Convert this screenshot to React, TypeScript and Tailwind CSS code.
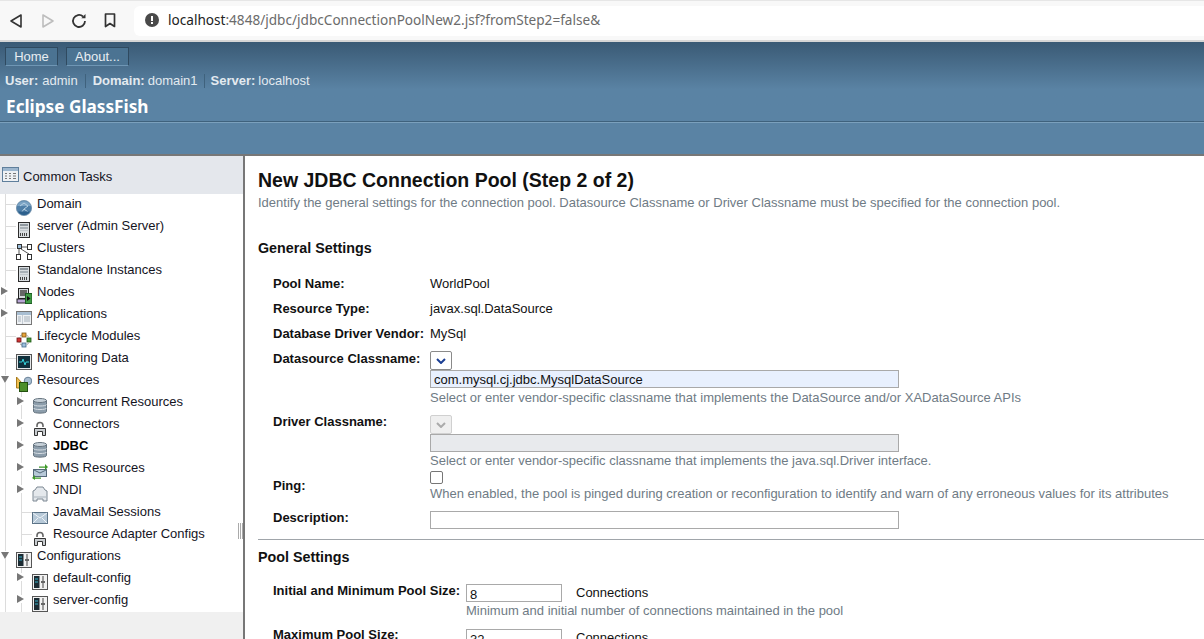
import type { ReactNode } from 'react';

const arial = 'font-["Liberation_Sans",Arial,sans-serif]';

function Glyph({ kind }: { kind: string }) {
  switch (kind) {
    case 'globe':
      return (
        <svg width="16" height="16" viewBox="0 0 16 16">
          <circle cx="8" cy="8" r="7.6" fill="#4f7fa8" stroke="#6f8ea8" strokeWidth="0.8" />
          <path d="M1 6a7.5 7.5 0 0 1 14 0z" fill="#7ba3c4" />
          <path d="M4 6l4-3 4 3-4 3-3 4M8 9l4 3" fill="none" stroke="#b6d0e3" />
          <path d="M2 11.5a7 7 0 0 0 12 0z" fill="#2c5f8c" />
        </svg>
      );
    case 'server':
      return (
        <svg width="16" height="16" viewBox="0 0 16 16">
          <rect x="2.5" y="0.5" width="11" height="15" fill="#d9dde0" stroke="#2b2b2b" />
          <rect x="4" y="2" width="8" height="2" fill="#8f989f" />
          <rect x="4" y="5" width="8" height="2" fill="#a8b0b6" />
          <rect x="4" y="8" width="8" height="1" fill="#c2c8cc" />
          <path d="M4.5 11v3M6.5 11v3M8.5 11v3M10.5 11v3" stroke="#444" />
        </svg>
      );
    case 'clusters':
      return (
        <svg width="16" height="16" viewBox="0 0 16 16" fill="#fff" stroke="#333">
          <path d="M5 3h6M3 5v6M5 5l8 5" fill="none" stroke="#555" />
          <rect x="1.5" y="0.5" width="4" height="4" fill="#9fc0dc" />
          <rect x="11.5" y="0.5" width="4" height="5" />
          <rect x="0.5" y="10.5" width="4" height="5" />
          <rect x="11.5" y="10.5" width="4" height="5" />
        </svg>
      );
    case 'nodes':
      return (
        <svg width="16" height="16" viewBox="0 0 16 16">
          <rect x="2.5" y="0.5" width="10" height="10" fill="#d5d9dc" stroke="#222" />
          <rect x="4" y="2" width="7" height="6" fill="#666" />
          <rect x="1" y="11" width="9" height="4" fill="#b9a6d6" stroke="#222" />
          <rect x="9.5" y="5.5" width="6.5" height="10" fill="#3f9a45" stroke="#1c5c22" />
          <path d="M11 8l3.5 2.5L11 13z" fill="#111" />
        </svg>
      );
    case 'apps':
      return (
        <svg width="16" height="16" viewBox="0 0 16 16">
          <rect x="0.5" y="1.5" width="15" height="13" fill="#eef1f4" stroke="#777" />
          <rect x="1" y="2" width="14" height="3" fill="#a8bed2" />
          <path d="M6.5 5v9" stroke="#c4ccd4" />
          <path d="M2 7h3M2 9h3M2 11h3M8 7h6M8 9h6M8 11h6" stroke="#a5b0ba" />
        </svg>
      );
    case 'lifecycle':
      return (
        <svg width="16" height="16" viewBox="0 0 16 16">
          <circle cx="8" cy="8" r="5.5" fill="none" stroke="#8a8a8a" strokeDasharray="2 1.5" />
          <rect x="6" y="1" width="4" height="4" fill="#e8a33a" stroke="#7a5412" strokeWidth="0.8" />
          <rect x="1" y="6" width="4" height="4" fill="#d13434" stroke="#6e1414" strokeWidth="0.8" />
          <rect x="11" y="6" width="4" height="4" fill="#4c9a3f" stroke="#1f5a16" strokeWidth="0.8" />
          <rect x="6" y="11" width="4" height="4" fill="#9fc0dc" stroke="#446b8c" strokeWidth="0.8" />
        </svg>
      );
    case 'monitor':
      return (
        <svg width="16" height="16" viewBox="0 0 16 16">
          <rect x="0.5" y="0.5" width="15" height="15" fill="#e6e8ea" stroke="#555" />
          <rect x="2" y="2" width="12" height="12" fill="#10303c" />
          <path d="M3 8h3l1-3 2 6 1-3h3" fill="none" stroke="#35d0d8" />
        </svg>
      );
    case 'resources':
      return (
        <svg width="16" height="16" viewBox="0 0 16 16">
          <path d="M0.5 1L6 7v5H0.5z" fill="#f0c050" stroke="#a87a1c" />
          <circle cx="12" cy="5" r="3.8" fill="#a8bdd0" stroke="#6a8299" />
          <rect x="3.5" y="6.5" width="8" height="9" fill="#4d8f2a" stroke="#23500f" />
        </svg>
      );
    case 'db':
      return (
        <svg width="16" height="16" viewBox="0 0 16 16">
          <path d="M1.5 2.5v11c0 2.2 13 2.2 13 0v-11z" fill="#8c9dab" stroke="#66747f" />
          <ellipse cx="8" cy="2.5" rx="6.5" ry="2" fill="#c7d1d9" stroke="#66747f" />
          <path d="M1.5 6.5c0 2 13 2 13 0M1.5 10c0 2 13 2 13 0" fill="none" stroke="#d6dde3" />
        </svg>
      );
    case 'connector':
      return (
        <svg width="16" height="16" viewBox="0 0 16 16">
          <path d="M5 7V5.5a3 3 0 0 1 6 0V7" fill="none" stroke="#666" strokeWidth="1.6" />
          <path d="M2.5 15.5V8.5h11v7h-3v-4h-5v4z" fill="#c8ccd0" stroke="#333" />
        </svg>
      );
    case 'jms':
      return (
        <svg width="16" height="16" viewBox="0 0 16 16">
          <rect x="1.5" y="5.5" width="13" height="7" fill="#b7c9d8" stroke="#55697a" />
          <path d="M2 6l6 3 6-3" fill="none" stroke="#55697a" />
          <path d="M7 2.5h6V0l3 3-3 3V3.8H7z" fill="#3f9a2a" />
          <path d="M9 13.5H3V11l-3 3 3 2v-1.2h6z" fill="#3f9a2a" />
        </svg>
      );
    case 'jndi':
      return (
        <svg width="16" height="16" viewBox="0 0 16 16">
          <path d="M3 4l2-3h6l2 3 2 1v10h-4v-2H5v2H1V5z" fill="#e4e8ec" stroke="#7c8893" />
          <path d="M2 11h12" stroke="#aab4bd" />
        </svg>
      );
    case 'mail':
      return (
        <svg width="16" height="12" viewBox="0 0 16 12">
          <rect x="0.5" y="0.5" width="15" height="11" fill="#b7c9d8" stroke="#5c7488" />
          <path d="M1 1l7 5 7-5M1 11l5-5M15 11l-5-5" fill="none" stroke="#eef3f7" />
        </svg>
      );
    default:
      return (
        <svg width="16" height="16" viewBox="0 0 16 16">
          <rect x="0.5" y="0.5" width="15" height="15" fill="#f2f2f2" stroke="#555" />
          <rect x="2" y="2" width="5.5" height="12" fill="#1c2b33" />
          <path d="M3 5h3M3 8h3" stroke="#35b0c8" />
          <path d="M11 2v12" stroke="#444" />
          <rect x="9" y="7" width="4" height="2" fill="#666" />
        </svg>
      );
  }
}

type TreeItem = {
  label: string;
  icon: string;
  level: 1 | 2;
  arrow?: 'right' | 'down';
  bold?: boolean;
};

const treeItems: TreeItem[] = [
  { label: 'Domain', icon: 'globe', level: 1 },
  { label: 'server (Admin Server)', icon: 'server', level: 1 },
  { label: 'Clusters', icon: 'clusters', level: 1 },
  { label: 'Standalone Instances', icon: 'server', level: 1 },
  { label: 'Nodes', icon: 'nodes', level: 1, arrow: 'right' },
  { label: 'Applications', icon: 'apps', level: 1, arrow: 'right' },
  { label: 'Lifecycle Modules', icon: 'lifecycle', level: 1 },
  { label: 'Monitoring Data', icon: 'monitor', level: 1 },
  { label: 'Resources', icon: 'resources', level: 1, arrow: 'down' },
  { label: 'Concurrent Resources', icon: 'db', level: 2, arrow: 'right' },
  { label: 'Connectors', icon: 'connector', level: 2, arrow: 'right' },
  { label: 'JDBC', icon: 'db', level: 2, arrow: 'right', bold: true },
  { label: 'JMS Resources', icon: 'jms', level: 2, arrow: 'right' },
  { label: 'JNDI', icon: 'jndi', level: 2, arrow: 'right' },
  { label: 'JavaMail Sessions', icon: 'mail', level: 2 },
  { label: 'Resource Adapter Configs', icon: 'connector', level: 2 },
  { label: 'Configurations', icon: 'config', level: 1, arrow: 'down' },
  { label: 'default-config', icon: 'config', level: 2, arrow: 'right' },
  { label: 'server-config', icon: 'config', level: 2, arrow: 'right' },
];

function Arrow({ dir }: { dir: 'right' | 'down' }) {
  return (
    <svg width="8" height="8" viewBox="0 0 8 8" className="shrink-0">
      {dir === 'right' ? <path d="M0 0l7 4-7 4z" fill="#777" /> : <path d="M0 1h8L4 8z" fill="#777" />}
    </svg>
  );
}

function TreeRow({ item }: { item: TreeItem }) {
  return (
    <div className="flex h-[22px] text-[13px] leading-[20px] text-[#14141e]">
      {/* guide column for the top level */}
      <div className="flex w-[16px] shrink-0">
        <div className="relative ml-[5px] h-full w-[11px] border-l border-[#dcdcdc]">
          {item.level === 1 && !item.arrow && <div className="mt-[10px] h-px w-[10px] bg-[#dcdcdc]" />}
          {item.level === 1 && item.arrow && (
            <div className="absolute left-[-5px] top-[5px] bg-white">
              <Arrow dir={item.arrow} />
            </div>
          )}
        </div>
      </div>
      {item.level === 2 && (
        <div className="flex w-[16px] shrink-0">
          <div className="relative ml-[5px] h-full w-[11px] border-l border-[#dcdcdc]">
            {!item.arrow && <div className="mt-[10px] h-px w-[10px] bg-[#dcdcdc]" />}
            {item.arrow && (
              <div className="absolute left-[-5px] top-[5px] bg-white">
                <Arrow dir={item.arrow} />
              </div>
            )}
          </div>
        </div>
      )}
      <div className="flex h-full w-[21px] shrink-0 items-end">
        <Glyph kind={item.icon} />
      </div>
      <span className={item.bold ? 'font-bold text-black' : ''}>{item.label}</span>
    </div>
  );
}

function BrowserBar() {
  return (
    <div className="flex h-[42px] items-center border-b-2 border-t border-b-[#d6d6d6] border-t-[#e6e6e6] bg-[#f8f8f8]">
      <div className="flex w-[134px] shrink-0 items-center pl-[9px]">
        <svg width="14" height="16" viewBox="0 0 14 16" fill="none" stroke="#333" strokeWidth="1.6" className="mr-[18px]">
          <path d="M12 2v12L2 8z" strokeLinejoin="round" />
        </svg>
        <svg width="14" height="16" viewBox="0 0 14 16" fill="none" stroke="#bdbdbd" strokeWidth="1.6" className="mr-[16px]">
          <path d="M2 2v12l10-6z" strokeLinejoin="round" />
        </svg>
        <svg width="16" height="16" viewBox="0 0 16 16" fill="none" stroke="#333" strokeWidth="1.8" className="mr-[17px]">
          <path d="M14 8a6 6 0 1 1-2-4.5" />
          <path d="M14.5 1v4.2h-4.2z" fill="#333" stroke="none" />
        </svg>
        <svg width="12" height="15" viewBox="0 0 12 15" fill="none" stroke="#333" strokeWidth="1.7">
          <path d="M1.5 1h9v12.5L6 10.5l-4.5 3z" strokeLinejoin="round" />
        </svg>
      </div>
      <div className="flex h-[30px] flex-1 items-center rounded-l-[6px] bg-white pb-[1px] pl-[11px] font-['Noto_Sans',sans-serif] text-[13.6px] text-[#6b6b6b]">
        <svg width="14" height="14" viewBox="0 0 14 14" className="mr-[9px] shrink-0">
          <circle cx="7" cy="7" r="7" fill="#4a4a4a" />
          <rect x="6" y="3" width="2" height="5" fill="#fff" />
          <rect x="6" y="9" width="2" height="2" fill="#fff" />
        </svg>
        <span className="text-[#222]">localhost</span>
        <span>:4848/jdbc/jdbcConnectionPoolNew2.jsf?fromStep2=false&amp;</span>
      </div>
    </div>
  );
}

function MastButton({ children, className }: { children: ReactNode; className: string }) {
  return (
    <div
      className={`flex h-[19px] items-center justify-center border border-t-[#2f4a60] border-l-[#2f4a60] border-r-[#2f4a60] border-b-[#6f96b4] bg-[#4b7392] text-[13px] text-[#e8eef3] ${className}`}
    >
      {children}
    </div>
  );
}

function Masthead() {
  return (
    <div className={`${arial} h-[114px] border-b-2 border-[#777] bg-[#5a83a4]`}>
      <div className="h-[80px] border-b border-[#3f627d] bg-gradient-to-b from-[#3a5a75] to-[#5a83a4] to-[60%] pl-[5px] pt-[5px]">
        <div className="flex gap-[8px]">
          <MastButton className="w-[53px]">Home</MastButton>
          <MastButton className="w-[63px]">About...</MastButton>
        </div>
        <div className="mt-[6px] flex h-[18px] items-center text-[13px] text-[#e3eaf0]">
          <b>User:</b>
          <span className="ml-[4px]">admin</span>
          <div className="mx-[7px] h-[14px] w-px bg-[#3f627d]" />
          <b>Domain:</b>
          <span className="ml-[3px]">domain1</span>
          <div className="mx-[6px] h-[14px] w-px bg-[#3f627d]" />
          <b>Server:</b>
          <span className="ml-[3px]">localhost</span>
        </div>
        <div className="ml-px mt-[4px] font-['Noto_Sans',sans-serif] text-[17.2px] font-bold leading-[26px] text-white">
          Eclipse GlassFish
        </div>
      </div>
      <div className="h-px bg-[#7ba0bc]" />
    </div>
  );
}

function Sidebar() {
  return (
    <div className="flex w-[245px] shrink-0 flex-col border-r-2 border-[#777] bg-[#f0f0f0]">
      <div className="flex h-[38px] shrink-0 items-center bg-[#e4e7ec] pl-[2px] pt-[3px] text-[13px] text-[#14141e]">
        <svg width="17" height="15" viewBox="0 0 17 15" className="mb-[4px] mr-[4px]">
          <rect x="0.5" y="0.5" width="16" height="14" fill="#eef1f4" stroke="#5f7f9c" />
          <rect x="1" y="1" width="15" height="3" fill="#9db7cf" />
          <path d="M3 6.5h2M7 6.5h2M11 6.5h3M3 9h2M7 9h2M11 9h3M3 11.5h2M7 11.5h2M11 11.5h3" stroke="#777" />
        </svg>
        Common Tasks
      </div>
      <div className="relative bg-white">
        {treeItems.map((item) => (
          <TreeRow key={item.label} item={item} />
        ))}
        <div className="absolute right-0 top-[329px] flex h-[16px] gap-px">
          <div className="w-px bg-[#aaa]" />
          <div className="w-px bg-[#aaa]" />
          <div className="w-px bg-[#aaa]" />
        </div>
      </div>
    </div>
  );
}

function Help({ children }: { children: ReactNode }) {
  return <div className="h-[18px] text-[13px] leading-[18px] text-[#6f7b85]">{children}</div>;
}

function Row({ label, h, labelTop = 0, children }: { label: string; h: number; labelTop?: number; children: ReactNode }) {
  return (
    <div className="flex pl-[15px]" style={{ height: h }}>
      <div className="w-[157px] shrink-0 text-[13px] font-bold leading-[18px] text-[#111]" style={{ marginTop: labelTop }}>
        {label}
      </div>
      <div className="min-w-0 flex-1">{children}</div>
    </div>
  );
}

function ComboArrow({ disabled }: { disabled?: boolean }) {
  return (
    <div
      className={`flex h-[19px] w-[22px] items-center justify-center rounded-[2px] border ${
        disabled ? 'border-[#d0d0d0] bg-[#efefef]' : 'border-[#8a8a8a] bg-white'
      }`}
    >
      <svg width="10" height="6" viewBox="0 0 10 6" fill="none" stroke={disabled ? '#aaa' : '#1c3f94'} strokeWidth="2">
        <path d="M1 1l4 4 4-4" />
      </svg>
    </div>
  );
}

function Main() {
  return (
    <div className={`${arial} min-w-0 flex-1 overflow-hidden bg-white pl-[13px] text-[13px] text-[#111]`}>
      <h1 className="mt-[12px] text-[19.5px] font-bold leading-[24px] text-[#111]">New JDBC Connection Pool (Step 2 of 2)</h1>
      <div className="mt-[2px] h-[18px] leading-[18px] text-[#6f7b85]">
        Identify the general settings for the connection pool. Datasource Classname or Driver Classname must be specified for the connection pool.
      </div>
      <h2 className="mb-[16px] mt-[26px] text-[14.3px] font-bold leading-[20px]">General Settings</h2>
      <Row label="Pool Name:" h={25} labelTop={1}>
        <div className="pt-[1px] leading-[18px]">WorldPool</div>
      </Row>
      <Row label="Resource Type:" h={25} labelTop={1}>
        <div className="pt-[1px] leading-[18px]">javax.sql.DataSource</div>
      </Row>
      <Row label="Database Driver Vendor:" h={26} labelTop={1}>
        <div className="pt-[1px] leading-[18px]">MySql</div>
      </Row>
      <Row label="Datasource Classname:" h={63}>
        <div className="pt-[1px]">
          <ComboArrow />
        </div>
        <div className="h-[18px] w-[469px] border border-[#a9a9a9] bg-[#e8f0fe] pl-[3px] leading-[18px] text-[#111]">
          com.mysql.cj.jdbc.MysqlDataSource
        </div>
        <div className="pt-[1px]">
          <Help>Select or enter vendor-specific classname that implements the DataSource and/or XADataSource APIs</Help>
        </div>
      </Row>
      <Row label="Driver Classname:" h={58}>
        <div className="pt-[2px]">
          <ComboArrow disabled />
        </div>
        <div className="h-[18px] w-[469px] border border-[#a9a9a9] bg-[#e8eaed]" />
        <Help>Select or enter vendor-specific classname that implements the java.sql.Driver interface.</Help>
      </Row>
      <Row label="Ping:" h={40} labelTop={6}>
        <div className="mb-px h-[13px] w-[13px] rounded-[2px] border border-[#767676] bg-white" />
        <Help>When enabled, the pool is pinged during creation or reconfiguration to identify and warn of any erroneous values for its attributes</Help>
      </Row>
      <Row label="Description:" h={28} labelTop={-2}>
        <div className="h-[18px] w-[469px] border border-[#a9a9a9] bg-white" />
      </Row>
      <div className="h-px bg-[#a0a5aa]" />
      <h2 className="mb-[17px] mt-[7px] text-[14.3px] font-bold leading-[20px]">Pool Settings</h2>
      <div className="flex h-[45px] pl-[15px]">
        <div className="w-[193px] shrink-0 font-bold leading-[14px]">Initial and Minimum Pool Size:</div>
        <div>
          <div className="flex">
            <div className="h-[18px] w-[96px] border border-[#a9a9a9] pl-[3px] pt-[2px] leading-[16px]">8</div>
            <div className="ml-[14px] leading-[18px]">Connections</div>
          </div>
          <Help>Minimum and initial number of connections maintained in the pool</Help>
        </div>
      </div>
      <div className="flex pl-[15px]">
        <div className="-mt-px w-[193px] shrink-0 font-bold leading-[14px]">Maximum Pool Size:</div>
        <div className="flex">
          <div className="h-[18px] w-[96px] border border-[#a9a9a9] pl-[3px] pt-[2px] leading-[16px]">32</div>
          <div className="ml-[14px] leading-[18px]">Connections</div>
        </div>
      </div>
    </div>
  );
}

export default function App() {
  return (
    <div className={`${arial} flex h-[639px] w-[1204px] flex-col overflow-hidden bg-white`}>
      <BrowserBar />
      <Masthead />
      <div className="flex min-h-0 flex-1">
        <Sidebar />
        <Main />
      </div>
    </div>
  );
}
